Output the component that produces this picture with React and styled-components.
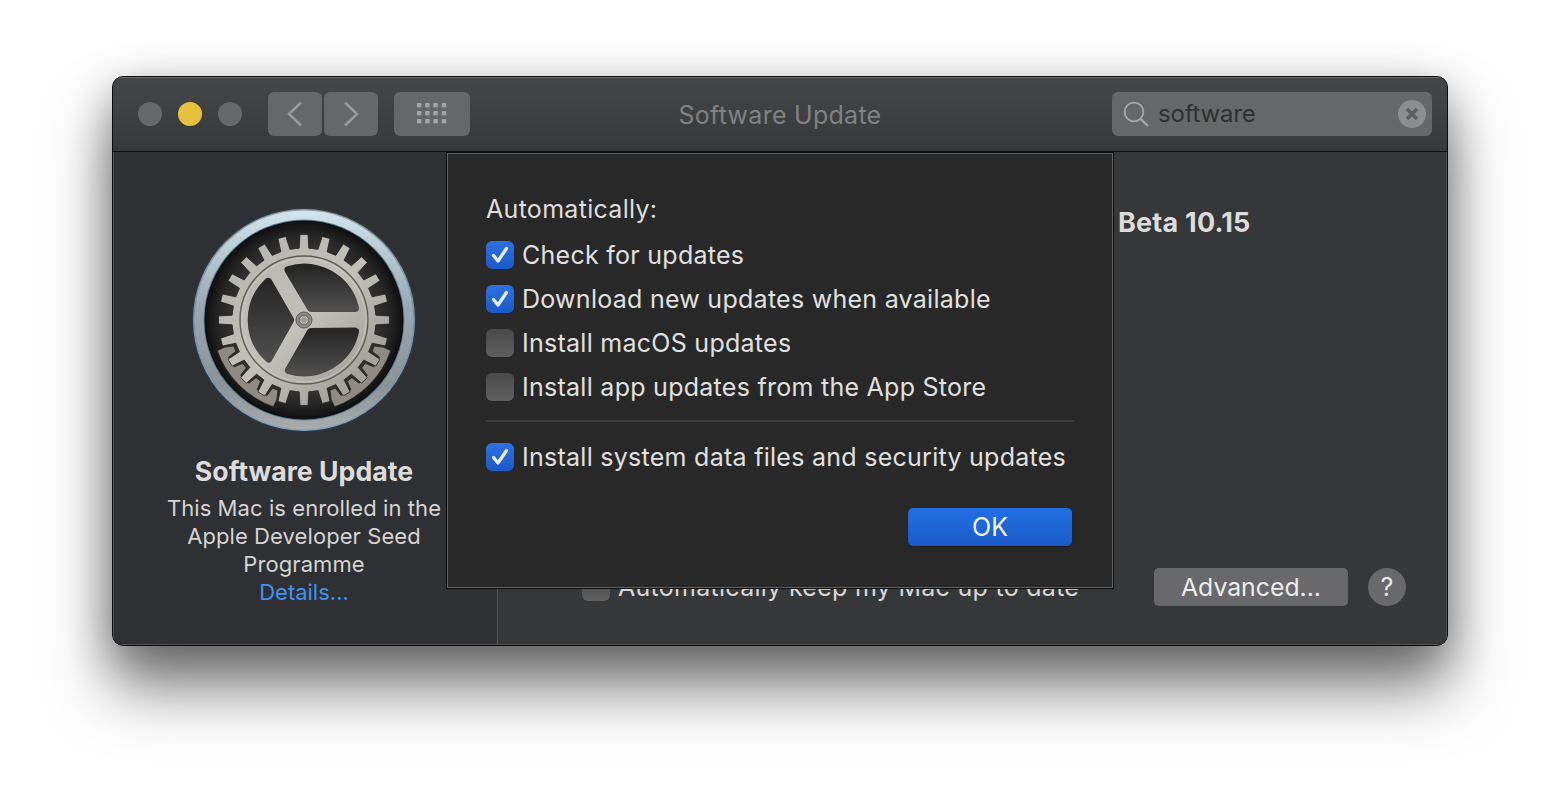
import React from 'react';
import styled, { createGlobalStyle } from 'styled-components';

const GlobalStyle = createGlobalStyle`
  * { box-sizing: border-box; }
  html, body { margin: 0; background: #fff; }
  body { font-family: Inter, "Noto Sans", "Liberation Sans", sans-serif; overflow: hidden; }
`;

const Page = styled.div`
  width: 1560px;
  height: 794px;
  padding: 76px 112px 0;
`;

const Window = styled.div`
  width: 1336px;
  height: 570px;
  display: flex;
  flex-direction: column;
  border: 1px solid #0c0c0c;
  border-radius: 11px;
  overflow: hidden;
  background: #363739;
`;

const Shadowed = styled.div`
  width: 1336px;
  height: 570px;
  border-radius: 11px;
  box-shadow: 0 42px 62px rgba(0, 0, 0, 0.5), 0 10px 44px rgba(0, 0, 0, 0.28);
`;

const TitleBar = styled.header`
  height: 75px;
  flex: none;
  display: grid;
  grid-template-columns: minmax(0, 1fr) auto minmax(0, 1fr);
  align-items: center;
  padding: 0 15px 1px;
  background: linear-gradient(#454648, #37383a);
  border-bottom: 1px solid #0e0e0e;
  box-shadow: inset 0 1px 0 #6c6c6c;
`;

const LeftTools = styled.div`
  display: flex;
  align-items: center;
  padding-left: 10px;
`;

const Light = styled.span`
  width: 24px;
  height: 24px;
  flex: none;
  border-radius: 50%;
  margin-right: 16px;
  background: ${props => props.$color};
`;

const NavGroup = styled.div`
  display: flex;
  gap: 2px;
  margin-left: 10px;
`;

const ToolButton = styled.button`
  width: ${props => props.$width}px;
  height: 44px;
  flex: none;
  margin-left: ${props => props.$offset || 0}px;
  padding: 0;
  border: 0;
  border-radius: 6px;
  background: #666769;
  display: flex;
  align-items: center;
  justify-content: center;
`;

const WindowTitle = styled.h1`
  margin: 2px 0 0;
  font-size: 25px;
  font-weight: 400;
  letter-spacing: 0.27px;
  color: #808183;
`;

const SearchBox = styled.div`
  justify-self: end;
  width: 320px;
  height: 44px;
  border-radius: 6px;
  background: #666769;
  display: flex;
  align-items: center;
  padding: 0 6px 0 10px;
`;

const SearchText = styled.span`
  flex: 1;
  margin-left: 8px;
  font-size: 24px;
  letter-spacing: -0.2px;
  color: #2f3032;
`;

const Body = styled.div`
  position: relative;
  flex: 1;
  display: flex;
  min-height: 0;
  border: 1px solid #4f5052;
  border-top: 0;
`;

const Sidebar = styled.aside`
  width: 384px;
  flex: none;
  display: flex;
  flex-direction: column;
  align-items: center;
  padding: 54px 3px 0 0;
  background: #2f3033;
  border-right: 1px solid #555658;
`;

const SidebarTitle = styled.h2`
  margin: 22px 0 8px;
  font-size: 26.7px;
  line-height: 30px;
  font-weight: 700;
  color: #dcdcdc;
`;

const SidebarText = styled.p`
  margin: 0;
  font-size: 22px;
  line-height: 28px;
  letter-spacing: 0.08px;
  text-align: center;
  white-space: nowrap;
  color: #d4d4d4;
`;

const DetailsLink = styled.a`
  font-size: 22px;
  line-height: 28px;
  color: #3f93f0;
`;

const Main = styled.main`
  flex: 1;
  display: flex;
  flex-direction: column;
  justify-content: space-between;
  padding: 56px 40px 38px 84px;
  background: #363739;
`;

const Heading = styled.h3`
  margin: 0 0 0 536px;
  font-size: 27px;
  line-height: 30px;
  font-weight: 700;
  letter-spacing: 0.2px;
  color: #dcdcdc;
  white-space: nowrap;
`;

const FooterRow = styled.div`
  display: flex;
  align-items: center;
`;

const FooterLabel = styled.span`
  margin-left: 8px;
  font-size: 25px;
  letter-spacing: 0.28px;
  white-space: nowrap;
  color: #d8d8d8;
`;

const GreyButton = styled.button`
  width: 194px;
  height: 38px;
  margin-left: auto;
  padding: 0;
  border: 0;
  border-radius: 5px;
  background: #69696b;
  font: inherit;
  font-size: 24.8px;
  color: #ececec;
`;

const HelpButton = styled.button`
  width: 38px;
  height: 38px;
  margin-left: 20px;
  padding: 0;
  border: 0;
  border-radius: 50%;
  background: #69696b;
  font: inherit;
  font-size: 25px;
  color: #ececec;
`;

const Sheet = styled.section`
  position: absolute;
  left: 332px;
  top: 0;
  width: 668px;
  height: 437px;
  padding: 34px 39px 0;
  border: 1px solid #0c0c0c;
  background: #282828;
  box-shadow: inset 0 0 0 1px #626262;
`;

const SheetLabel = styled.div`
  height: 44px;
  margin-bottom: 2px;
  display: flex;
  align-items: center;
  font-size: 25px;
  letter-spacing: 0.3px;
  color: #dedede;
`;

const Row = styled.label`
  height: 44px;
  display: flex;
  align-items: center;
  font-size: 25px;
  letter-spacing: 0.27px;
  white-space: nowrap;
  color: #e0e0e0;
`;

const RowText = styled.span`
  margin-left: 8px;
`;

const Box = styled.span`
  width: 28px;
  height: 28px;
  flex: none;
  border-radius: 6px;
  display: flex;
  align-items: center;
  justify-content: center;
  background: ${props => (props.$checked
    ? 'linear-gradient(#2c71e2, #1b59c6)'
    : 'linear-gradient(#4a4a4a, #5e5e5e)')};
`;

const Divider = styled.hr`
  height: 2px;
  margin: 11px 0 13px;
  border: 0;
  background: #3b3b3b;
`;

const SheetActions = styled.div`
  display: flex;
  justify-content: flex-end;
  margin: 29px 2px 0 0;
`;

const OkButton = styled.button`
  width: 164px;
  height: 38px;
  padding: 0;
  border: 0;
  border-radius: 5px;
  background: linear-gradient(#216fe3, #1a5bc8);
  box-shadow: 0 1px 1px rgba(0, 0, 0, 0.35);
  font: inherit;
  font-size: 25px;
  color: #f0f4fc;
`;

const Check = () => (
  <svg width="20" height="20" viewBox="0 0 20 20">
    <path d="M3.5 10.5 L8 16 L16.5 3.5" fill="none" stroke="#e6ecfa" strokeWidth="3.3" strokeLinecap="round" strokeLinejoin="round" />
  </svg>
);

const Chevron = ({ flip }) => (
  <svg width="16" height="26" viewBox="0 0 16 26">
    <path d={flip ? 'M2 1.5 L14 13 L2 24.5' : 'M14 1.5 L2 13 L14 24.5'} fill="none" stroke="#98999a" strokeWidth="2.6" />
  </svg>
);

const GridIcon = () => (
  <svg width="30" height="21" viewBox="0 0 30 21" fill="#a3a3a4">
    {[0, 8, 16].map(y => [0, 8.2, 16.4, 24.8].map(x => (
      <rect key={`${x}-${y}`} x={x} y={y} width="4.4" height="4.4" />
    )))}
  </svg>
);

const SearchIcon = () => (
  <svg width="28" height="28" viewBox="0 0 28 28" fill="none" stroke="#a6a7a8">
    <circle cx="12" cy="12" r="9.4" strokeWidth="1.8" />
    <path d="M18.6 18.8 L26 26" strokeWidth="2.4" />
  </svg>
);

const ClearIcon = () => (
  <svg width="28" height="28" viewBox="0 0 28 28">
    <circle cx="14" cy="14" r="14" fill="#8c8d8e" />
    <path d="M9 9 L19 19 M19 9 L9 19" stroke="#5b5c5e" strokeWidth="3.2" />
  </svg>
);

// gear drawing, everything worked out in polar coordinates around 0,0
const polar = (r, deg) => {
  const a = (deg * Math.PI) / 180;
  return `${(r * Math.cos(a)).toFixed(2)} ${(r * Math.sin(a)).toFixed(2)}`;
};

const gearPath = () => {
  let d = '';
  for (let i = 0; i < 24; i++) {
    const c = i * 15;
    d += `${i ? 'L' : 'M'}${polar(72, c - 3.8)} L${polar(85.5, c - 2.7)} L${polar(85.5, c + 2.7)} L${polar(72, c + 3.8)} `;
  }
  return `${d}Z`;
};

// the two toothed pieces that sit under the gear, low left and low right
const clawPath = (from, to) => {
  const dir = from < to ? 1 : -1;
  let d = `M${polar(92, from - 3 * dir)} A92 92 0 0 ${dir > 0 ? 1 : 0} ${polar(92, to + 3 * dir)} `;
  const steps = Math.round(Math.abs(to - from) / 15);
  for (let i = 0; i <= steps; i++) {
    const c = to - dir * i * 15;
    d += `L${polar(84, c + 3.6 * dir)} L${polar(75, c + 2.2 * dir)} L${polar(75, c - 2.2 * dir)} L${polar(84, c - 3.6 * dir)} `;
  }
  return `${d}Z`;
};

const rotatePoint = ([x, y], deg) => {
  const a = (deg * Math.PI) / 180;
  return [x * Math.cos(a) - y * Math.sin(a), x * Math.sin(a) + y * Math.cos(a)].map(v => v.toFixed(2));
};

const holePath = deg => {
  const inner = rotatePoint([7, -12], deg);
  const start = rotatePoint([51, -12], deg);
  const end = rotatePoint([-15.5, -50], deg);
  return `M${inner.join(' ')} L${start.join(' ')} A52.4 52.4 0 0 0 ${end.join(' ')} Z`;
};

const GearIcon = () => (
  <svg width="228" height="228" viewBox="-114 -114 228 228">
    <defs>
      <linearGradient id="ring" x1="0" y1="0" x2="0" y2="1">
        <stop offset="0" stopColor="#d3e4ec" />
        <stop offset="0.45" stopColor="#98a7b1" />
        <stop offset="0.8" stopColor="#8d9296" />
        <stop offset="1" stopColor="#a9adb0" />
      </linearGradient>
      <linearGradient id="ringEdge" x1="0" y1="0" x2="0" y2="1">
        <stop offset="0" stopColor="#8d9ea8" />
        <stop offset="0.5" stopColor="#6f92ad" />
        <stop offset="1" stopColor="#7ea3c4" />
      </linearGradient>
      <radialGradient id="well" cx="0.5" cy="0.5" r="0.5">
        <stop offset="0.6" stopColor="#3c3c3c" />
        <stop offset="0.88" stopColor="#222" />
        <stop offset="1" stopColor="#0e0e0e" />
      </radialGradient>
      <linearGradient id="metal" x1="0" y1="0" x2="1" y2="1">
        <stop offset="0" stopColor="#b4b2ad" />
        <stop offset="0.5" stopColor="#c2c0bb" />
        <stop offset="1" stopColor="#94928d" />
      </linearGradient>
      <linearGradient id="hole" x1="0" y1="0" x2="0" y2="1">
        <stop offset="0" stopColor="#262626" />
        <stop offset="1" stopColor="#4e4e4e" />
      </linearGradient>
    </defs>
    <circle r="112.5" fill="#32383c" />
    <circle r="111" fill="url(#ringEdge)" />
    <circle r="109.5" fill="url(#ring)" />
    <circle r="100.5" fill="#5f7f99" />
    <circle r="99.5" fill="url(#well)" />
    <path d={clawPath(22.5, 67.5)} fill="#8f8a85" stroke="#2a2a2a" strokeWidth="0.8" strokeLinejoin="round" />
    <path d={clawPath(157.5, 112.5)} fill="#8f8a85" stroke="#2a2a2a" strokeWidth="0.8" strokeLinejoin="round" />
    <path d={gearPath()} fill="url(#metal)" stroke="#222" strokeWidth="0.8" strokeLinejoin="round" />
    <circle r="64" fill="none" stroke="#605e5a" strokeWidth="1.4" />
    <circle r="62" fill="none" stroke="#d0cec9" strokeWidth="0.8" />
    {[0, 120, 240].map(deg => (
      <path key={deg} d={holePath(deg)} fill="url(#hole)" stroke="url(#hole)" strokeWidth="8" strokeLinejoin="round" />
    ))}
    <circle r="8" fill="#8b8985" stroke="#5f5d5a" strokeWidth="1" />
    <circle r="4.6" fill="#b3b1ad" stroke="#6a6865" strokeWidth="1" />
    <circle r="2.2" fill="#95938f" />
  </svg>
);

const autoRows = [
  { label: 'Check for updates', checked: true },
  { label: 'Download new updates when available', checked: true },
  { label: 'Install macOS updates', checked: false },
  { label: 'Install app updates from the App Store', checked: false },
];

const App = () => {
  return (
    <Page>
      <GlobalStyle />
      <Shadowed>
        <Window>
          <TitleBar>
            <LeftTools>
              <Light $color="#67686a" />
              <Light $color="#e6c13e" />
              <Light $color="#67686a" />
              <NavGroup>
                <ToolButton $width={54}><Chevron /></ToolButton>
                <ToolButton $width={54}><Chevron flip /></ToolButton>
              </NavGroup>
              <ToolButton $width={76} $offset={16}><GridIcon /></ToolButton>
            </LeftTools>
            <WindowTitle>Software Update</WindowTitle>
            <SearchBox>
              <SearchIcon />
              <SearchText>software</SearchText>
              <ClearIcon />
            </SearchBox>
          </TitleBar>
          <Body>
            <Sidebar>
              <GearIcon />
              <SidebarTitle>Software Update</SidebarTitle>
              <SidebarText>
                This Mac is enrolled in the<br />
                Apple Developer Seed<br />
                Programme
              </SidebarText>
              <DetailsLink>Details...</DetailsLink>
            </Sidebar>
            <Main>
              <Heading>Beta 10.15</Heading>
              <FooterRow>
                <Box />
                <FooterLabel>Automatically keep my Mac up to date</FooterLabel>
                <GreyButton>Advanced...</GreyButton>
                <HelpButton>?</HelpButton>
              </FooterRow>
            </Main>
            <Sheet>
              <SheetLabel>Automatically:</SheetLabel>
              {autoRows.map(row => (
                <Row key={row.label}>
                  <Box $checked={row.checked}>{row.checked && <Check />}</Box>
                  <RowText>{row.label}</RowText>
                </Row>
              ))}
              <Divider />
              <Row>
                <Box $checked><Check /></Box>
                <RowText>Install system data files and security updates</RowText>
              </Row>
              <SheetActions>
                <OkButton>OK</OkButton>
              </SheetActions>
            </Sheet>
          </Body>
        </Window>
      </Shadowed>
    </Page>
  );
};

export default App;
